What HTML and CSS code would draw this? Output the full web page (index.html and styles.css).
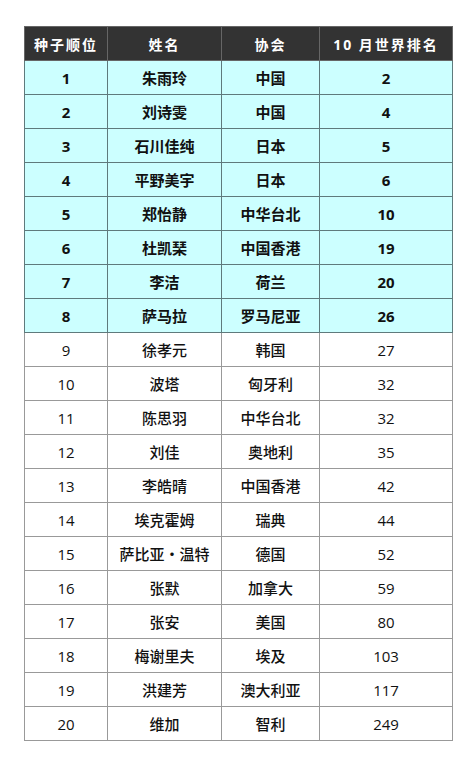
FILE: index.html
```html
<!DOCTYPE html>
<html lang="zh">
<head>
<meta charset="utf-8">
<link rel="stylesheet" href="styles.css">
</head>
<body>
<table class="seed">
<colgroup><col class="c1"><col class="c2"><col class="c3"><col class="c4"></colgroup>
<thead>
<tr><th>种子顺位</th><th>姓名</th><th>协会</th><th>10 月世界排名</th></tr>
</thead>
<tbody>
<tr class="top"><td>1</td><td>朱雨玲</td><td>中国</td><td>2</td></tr>
<tr class="top"><td>2</td><td>刘诗雯</td><td>中国</td><td>4</td></tr>
<tr class="top"><td>3</td><td>石川佳纯</td><td>日本</td><td>5</td></tr>
<tr class="top"><td>4</td><td>平野美宇</td><td>日本</td><td>6</td></tr>
<tr class="top"><td>5</td><td>郑怡静</td><td>中华台北</td><td>10</td></tr>
<tr class="top"><td>6</td><td>杜凯琹</td><td>中国香港</td><td>19</td></tr>
<tr class="top"><td>7</td><td>李洁</td><td>荷兰</td><td>20</td></tr>
<tr class="top"><td>8</td><td>萨马拉</td><td>罗马尼亚</td><td>26</td></tr>
<tr><td>9</td><td>徐孝元</td><td>韩国</td><td>27</td></tr>
<tr><td>10</td><td>波塔</td><td>匈牙利</td><td>32</td></tr>
<tr><td>11</td><td>陈思羽</td><td>中华台北</td><td>32</td></tr>
<tr><td>12</td><td>刘佳</td><td>奥地利</td><td>35</td></tr>
<tr><td>13</td><td>李皓晴</td><td>中国香港</td><td>42</td></tr>
<tr><td>14</td><td>埃克霍姆</td><td>瑞典</td><td>44</td></tr>
<tr><td>15</td><td>萨比亚・温特</td><td>德国</td><td>52</td></tr>
<tr><td>16</td><td>张默</td><td>加拿大</td><td>59</td></tr>
<tr><td>17</td><td>张安</td><td>美国</td><td>80</td></tr>
<tr><td>18</td><td>梅谢里夫</td><td>埃及</td><td>103</td></tr>
<tr><td>19</td><td>洪建芳</td><td>澳大利亚</td><td>117</td></tr>
<tr><td>20</td><td>维加</td><td>智利</td><td>249</td></tr>
</tbody>
</table>
</body>
</html>
```
FILE: styles.css
```css
html, body {
  margin: 0;
  padding: 0;
  background: #ffffff;
}
body {
  padding: 26px 0 0 24px;
  font-family: "Open Sans", "Noto Sans CJK SC", sans-serif;
  color: #111;
}
.seed {
  border-collapse: collapse;
  table-layout: fixed;
  width: 428px;
}
.c1 { width: 83px; }
.c2 { width: 114px; }
.c3 { width: 98px; }
.c4 { width: 133px; }
.seed th, .seed td {
  height: 34px;
  padding: 0;
  text-align: center;
  vertical-align: middle;
  border: 1px solid #999;
  font-size: 15px;
  box-sizing: border-box;
}
.seed th {
  background: #333333;
  color: #ffffff;
  font-weight: bold;
  font-size: 14px;
  letter-spacing: 2px;
  border-color: #666;
}
.seed tr.top td {
  background: #ccffff;
  font-weight: bold;
  border-color: #5f7a7c;
}
.seed td {
  color: #111;
  font-weight: 500;
}
```
